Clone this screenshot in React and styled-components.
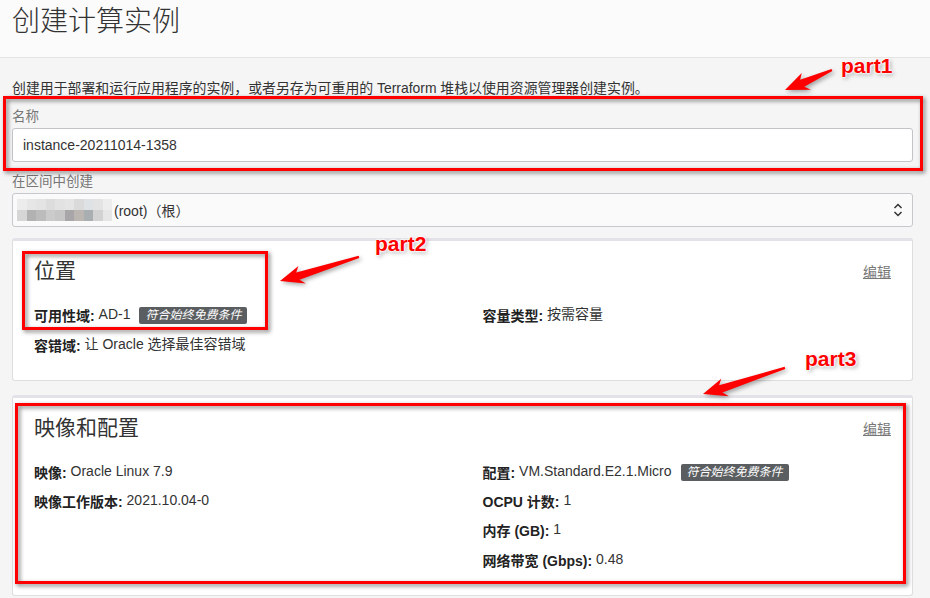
import React from "react";
import styled, { createGlobalStyle } from "styled-components";

// --- Data --- //

const mosaic = [
  ["#ececec", "#e6e6e6", "#e3e3e3", "#dcdcdc", "#e2e2e2", "#e4e4e4", "#dadada", "#dfe2e4", "#e3e3e3", "#ededed"],
  ["#d6d6d6", "#b2b2b2", "#bcbcbc", "#cbcbcb", "#c6c6c6", "#a8a6a8", "#bcb6b3", "#a9aeb1", "#d2d2d2", "#e6e6e6"],
];

const boxes = [
  { x: 3, y: 96, w: 920, h: 75 },
  { x: 22, y: 251, w: 246, h: 79 },
  { x: 15, y: 403, w: 891, h: 181 },
];

const arrows = [
  { tip: [785, 90], tail: [832, 70], label: "part1", lx: 841, ly: 55 },
  { tip: [280, 281], tail: [359, 257], label: "part2", lx: 375, ly: 233 },
  { tip: [703, 394], tail: [785, 368], label: "part3", lx: 805, ly: 348 },
];

// --- Components --- //

const ArrowShape = ({ tip, tail }) => {
  const dx = tail[0] - tip[0];
  const dy = tail[1] - tip[1];
  const len = Math.sqrt(dx * dx + dy * dy);
  const angle = (Math.atan2(dy, dx) * 180) / Math.PI;
  const pts = `0,0 22,-9 18,-3.5 ${len},-1.2 ${len},1 19,4.5 24,10`;
  return (
    <g transform={`translate(${tip[0]} ${tip[1]}) rotate(${angle})`}>
      <polygon points={pts} fill="#f00" />
    </g>
  );
};

const Chevrons = () => (
  <svg width="10" height="16" viewBox="0 0 10 16">
    <path d="M1.5 6 L5 2.5 L8.5 6" fill="none" stroke="#333" strokeWidth="1.5" />
    <path d="M1.5 10 L5 13.5 L8.5 10" fill="none" stroke="#333" strokeWidth="1.5" />
  </svg>
);

const Item = ({ label, value, badge }) => (
  <StyledItem>
    <b>{label}:</b> <span className="value">{value}</span>
    {badge && <Badge>符合始终免费条件</Badge>}
  </StyledItem>
);

const App = () => {
  return (
    <Page>
      <GlobalStyle />
      <Header>
        <h1>创建计算实例</h1>
      </Header>
      <Main>
        <Intro>
          创建用于部署和运行应用程序的实例，或者另存为可重用的 Terraform
          堆栈以使用资源管理器创建实例。
        </Intro>
        <Field>
          <Label>名称</Label>
          <Input defaultValue="instance-20211014-1358" />
        </Field>
        <Field>
          <Label>在区间中创建</Label>
          <Select>
            <Mosaic>
              {mosaic.flat().map((c, i) => (
                <Tile key={i} $color={c} />
              ))}
            </Mosaic>
            <span className="text">(root)（根）</span>
            <Chevrons />
          </Select>
        </Field>

        <Card>
          <CardHead>
            <h2>位置</h2>
            <EditLink href="#">编辑</EditLink>
          </CardHead>
          <Columns $gap={8}>
            <div>
              <Item label="可用性域" value="AD-1" badge />
              <Item label="容错域" value="让 Oracle 选择最佳容错域" />
            </div>
            <div>
              <Item label="容量类型" value="按需容量" />
            </div>
          </Columns>
        </Card>

        <Card $tight>
          <CardHead>
            <h2>映像和配置</h2>
            <EditLink href="#">编辑</EditLink>
          </CardHead>
          <Columns $gap={7.2}>
            <div>
              <Item label="映像" value="Oracle Linux 7.9" />
              <Item label="映像工作版本" value="2021.10.04-0" />
            </div>
            <div>
              <Item label="配置" value="VM.Standard.E2.1.Micro" badge />
              <Item label="OCPU 计数" value="1" />
              <Item label="内存 (GB)" value="1" />
              <Item label="网络带宽 (Gbps)" value="0.48" />
            </div>
          </Columns>
        </Card>
      </Main>

      {boxes.map((b, i) => (
        <RedBox key={i} $x={b.x} $y={b.y} $w={b.w} $h={b.h} />
      ))}
      <Arrows width="930" height="598">
        {arrows.map((a) => (
          <ArrowShape key={a.label} tip={a.tip} tail={a.tail} />
        ))}
      </Arrows>
      {arrows.map((a) => (
        <PartLabel key={a.label} $x={a.lx} $y={a.ly}>
          {a.label}
        </PartLabel>
      ))}
    </Page>
  );
};

export default App;

// --- Styles --- //

const GlobalStyle = createGlobalStyle`
  body {
    margin: 0;
    background: #f5f5f5;
    font-family: "Liberation Sans", "Noto Sans CJK SC", sans-serif;
    color: #333;
  }
`;

const Page = styled.div`
  position: relative;
  width: 930px;
  min-height: 598px;
  overflow: hidden;
`;

const Header = styled.header`
  height: 58px;
  box-sizing: border-box;
  background: #fbfbfb;
  border-bottom: 1px solid #e4e4e4;
  padding: 8px 12px 0;
  h1 {
    margin: 0;
    font-size: 28px;
    line-height: 28px;
    font-weight: 300;
    color: #333;
  }
`;

const Main = styled.main`
  padding: 0 17px 0 12px;
`;

const Intro = styled.p`
  margin: 21px 0 0;
  font-size: 13.9px;
  line-height: 18px;
  color: #333;
`;

const Field = styled.div`
  margin-top: 11px;
`;

const Label = styled.div`
  font-size: 13.5px;
  line-height: 18px;
  color: #777;
  margin-bottom: 2px;
`;

const Input = styled.input`
  display: block;
  width: 100%;
  height: 34px;
  box-sizing: border-box;
  border: 1px solid #c4c4c8;
  border-radius: 3px;
  background: #fff;
  padding: 0 10px;
  font-family: inherit;
  font-size: 14px;
  color: #333;
  outline: none;
`;

const Select = styled.div`
  display: flex;
  align-items: center;
  height: 34px;
  box-sizing: border-box;
  border: 1px solid #c8c8cc;
  border-radius: 3px;
  background: #fafafa;
  padding: 0 9px 0 4px;
  font-size: 14px;
  .text {
    margin-left: 2px;
    flex: 1;
  }
`;

const Mosaic = styled.div`
  display: grid;
  grid-template-columns: repeat(10, 9.5px);
  grid-template-rows: 11px 11px;
`;

const Tile = styled.span`
  background: ${(props) => props.$color};
`;

const Card = styled.section`
  margin-top: ${(props) => (props.$tight ? "14px" : "11px")};
  background: #fff;
  border: 1px solid #dedede;
  border-top: 3px solid #e2e2e8;
  border-radius: 3px;
  padding: 17px 21px 25px;
`;

const CardHead = styled.div`
  display: flex;
  justify-content: space-between;
  align-items: center;
  margin-bottom: 19px;
  h2 {
    margin: 0;
    font-size: 21px;
    line-height: 26px;
    font-weight: 400;
    color: #333;
  }
`;

const EditLink = styled.a`
  font-size: 14px;
  color: #777;
  text-decoration: underline;
`;

const Columns = styled.div`
  display: grid;
  grid-template-columns: 1fr 1fr;
  column-gap: 40px;
  > div {
    display: flex;
    flex-direction: column;
    gap: ${(props) => props.$gap}px;
  }
`;

const StyledItem = styled.div`
  height: 22px;
  font-size: 14px;
  line-height: 22px;
  color: #333;
  white-space: nowrap;
  b {
    font-weight: 700;
    color: #222;
  }
  .value {
    vertical-align: 2px;
  }
`;

const Badge = styled.span`
  display: inline-block;
  margin-left: 9px;
  padding: 0 6px;
  background: #5b5e61;
  color: #fff;
  border-radius: 2px;
  font-size: 12px;
  line-height: 17px;
  font-style: italic;
  vertical-align: 2px;
`;

const RedBox = styled.div`
  position: absolute;
  left: ${(props) => props.$x}px;
  top: ${(props) => props.$y}px;
  width: ${(props) => props.$w}px;
  height: ${(props) => props.$h}px;
  box-sizing: border-box;
  border: 3px solid #f00;
  filter: drop-shadow(2px 2px 2px rgba(0, 0, 0, 0.5));
  pointer-events: none;
`;

const Arrows = styled.svg`
  position: absolute;
  left: 0;
  top: 0;
  pointer-events: none;
  filter: drop-shadow(2px 2px 2px rgba(0, 0, 0, 0.35));
`;

const PartLabel = styled.div`
  position: absolute;
  left: ${(props) => props.$x}px;
  top: ${(props) => props.$y}px;
  font-family: "Liberation Sans", Arial, sans-serif;
  font-weight: 700;
  font-size: 21px;
  line-height: 22px;
  color: #f00;
  text-shadow: 0 0 2px #fff, 0 0 2px #fff, 0 0 2px #fff, 0 0 3px #fff,
    2px 2px 4px rgba(0, 0, 0, 0.35);
`;
